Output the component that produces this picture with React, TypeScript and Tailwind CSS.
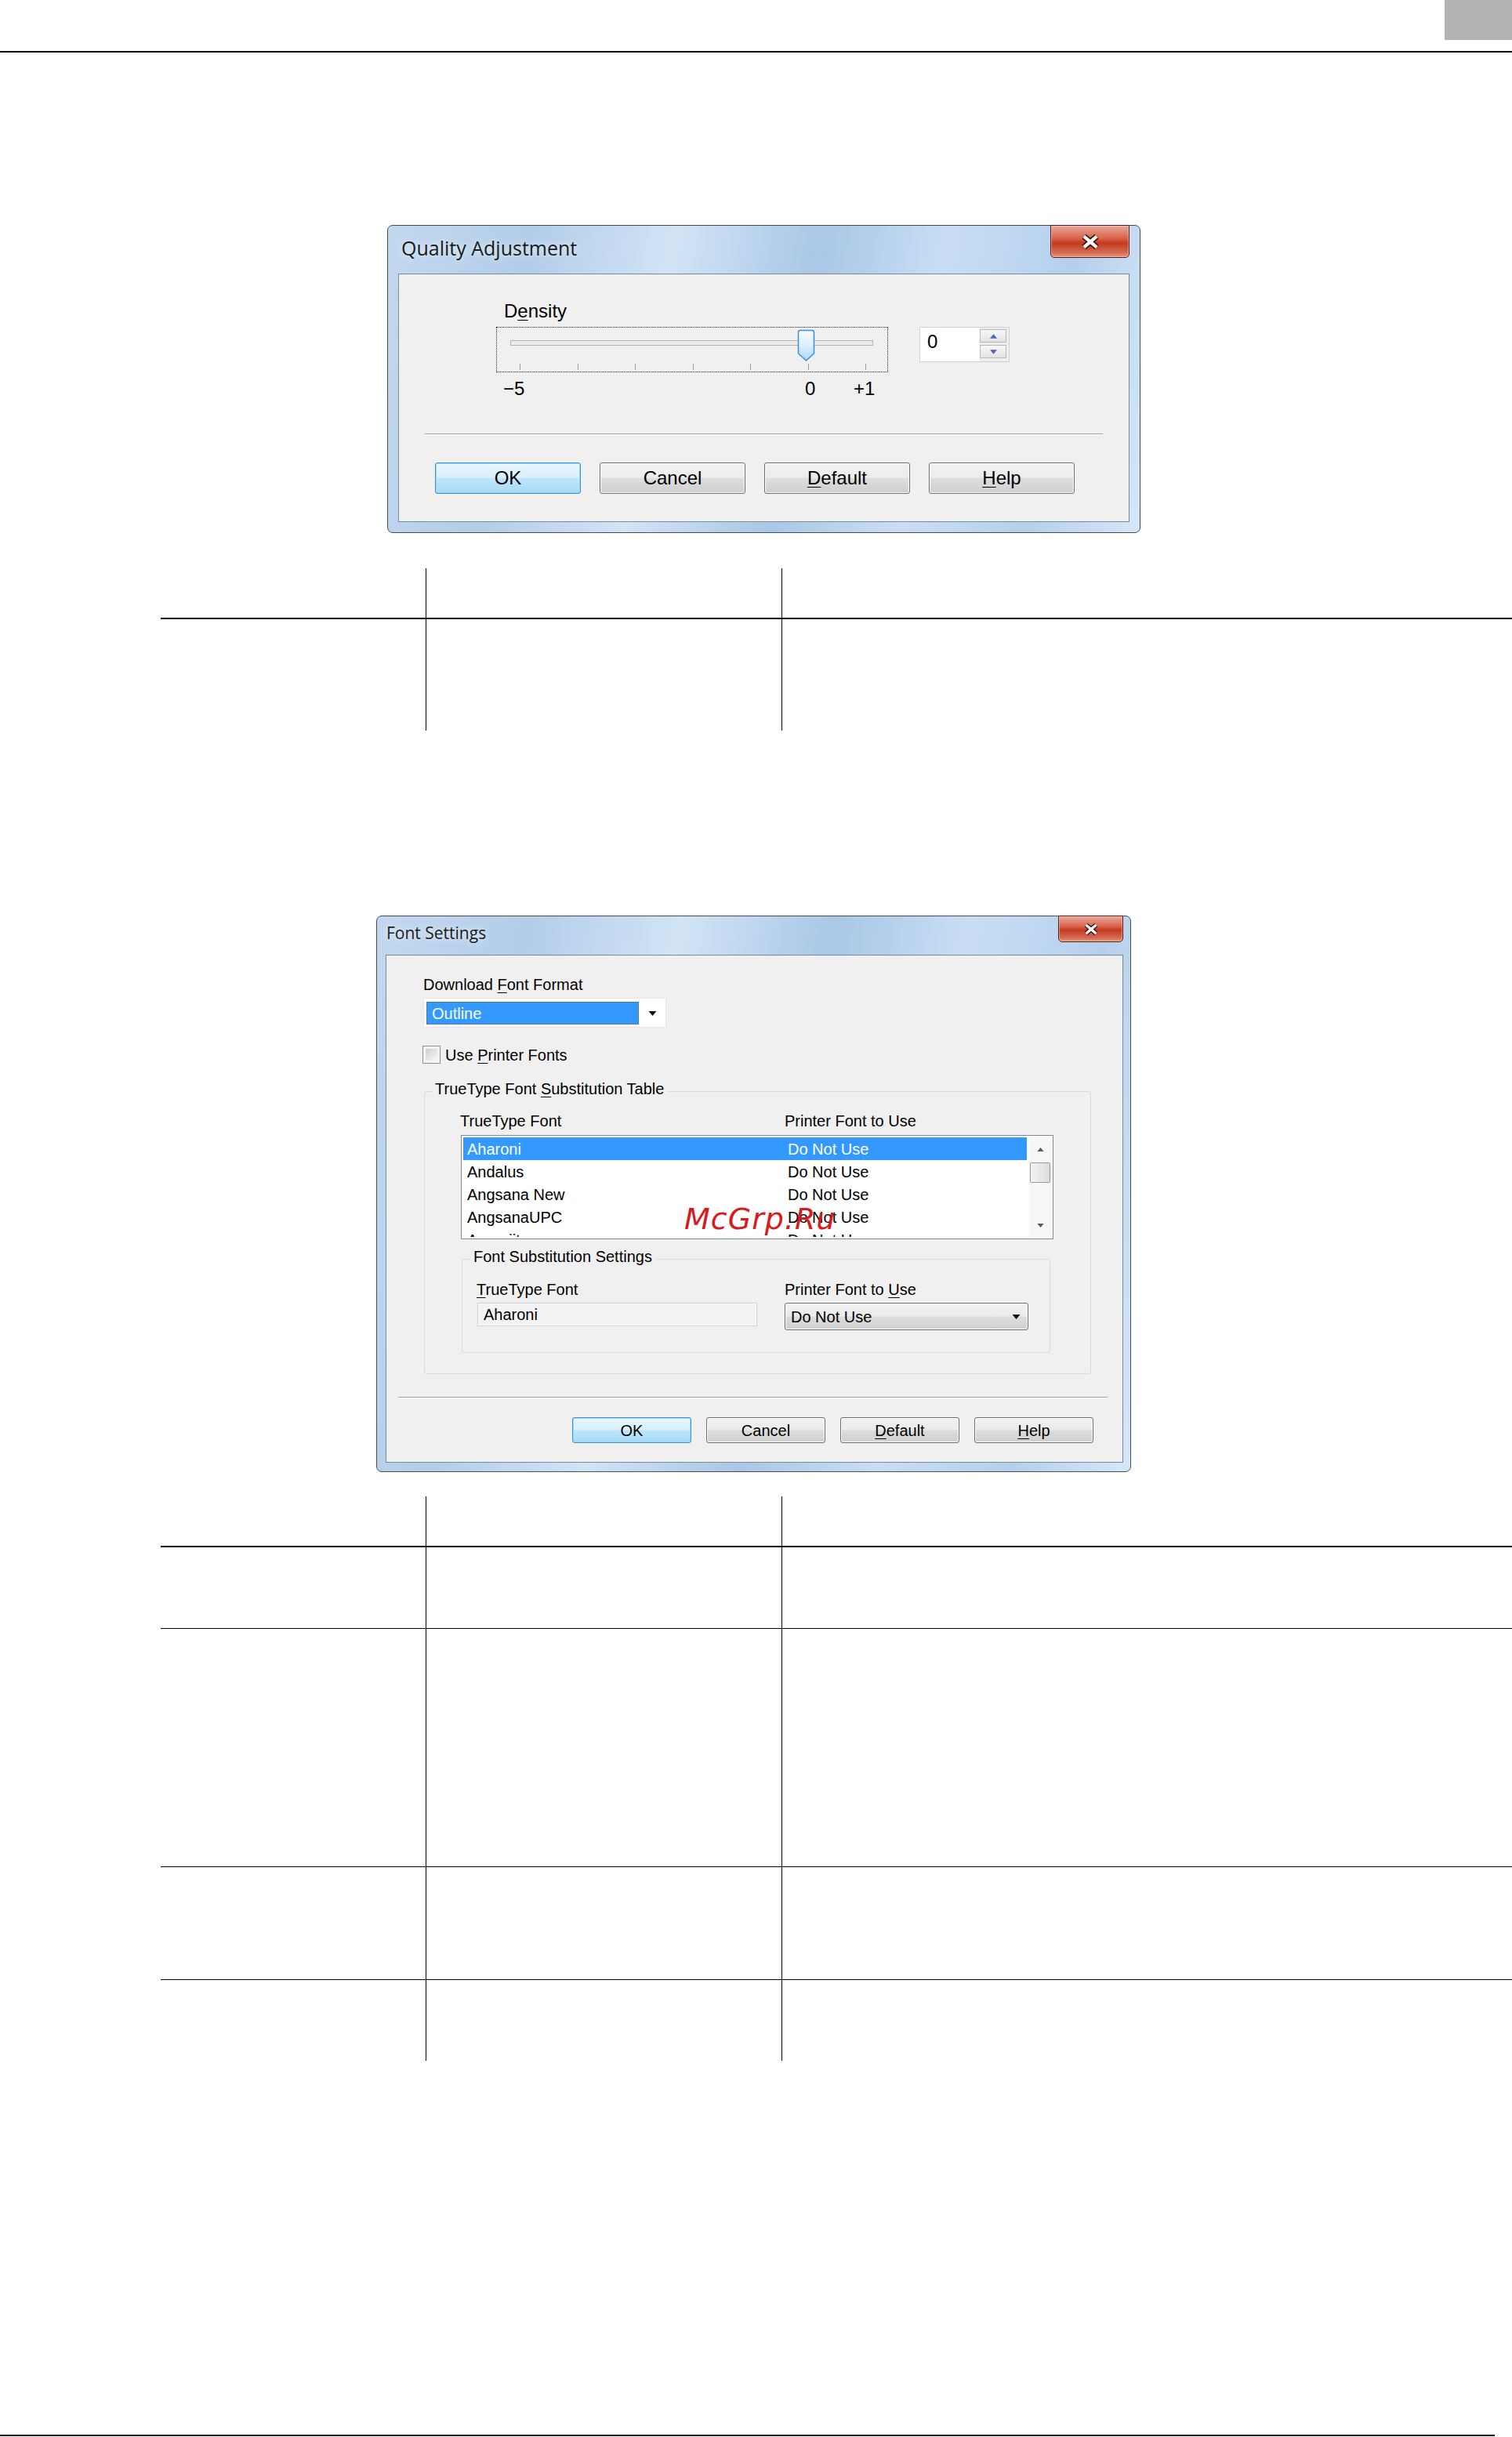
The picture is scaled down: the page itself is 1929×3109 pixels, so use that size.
import React from 'react';

// Windows 7 style dialogs on a manual page, each followed by an empty ruled table

const UI = "font-['Liberation_Sans',Arial,sans-serif]";
const TITLE = "font-['Open_Sans','Noto_Sans',sans-serif] text-[#1b1b1b] [text-shadow:0_0_8px_rgba(255,255,255,0.95)]";
const GLASS =
  'bg-[linear-gradient(100deg,#c2d8ef_0%,#b3cde9_18%,#d2e4f6_36%,#a9c7e6_54%,#c9def4_70%,#b5d0ec_86%,#d6e7f8_100%)]';

const FONT_ROWS = ['Aharoni', 'Andalus', 'Angsana New', 'AngsanaUPC', 'Aparajita'];

type BtnProps = { label: React.ReactNode; primary?: boolean; large?: boolean };

function WinButton({ label, primary, large }: BtnProps) {
  const size = large ? 'w-[186px] h-[40px] text-[24px]' : 'w-[152px] h-[33px] text-[20px]';
  const skin = primary
    ? 'border-[#3c8fd0] bg-[linear-gradient(to_bottom,#eaf6fd_0%,#d9f0fc_48%,#bee6fd_52%,#a7d9f5_100%)] shadow-[inset_0_0_0_1px_#9bd9fa]'
    : 'border-[#707070] bg-[linear-gradient(to_bottom,#f2f2f2_0%,#ebebeb_48%,#dddddd_52%,#cfcfcf_100%)] shadow-[inset_0_0_0_1px_#fcfcfc]';
  return (
    <div className={`flex items-center justify-center shrink-0 rounded-[3px] border leading-none text-black ${size} ${skin}`}>
      {label}
    </div>
  );
}

function CloseButton({ className, glyph }: { className: string; glyph: string }) {
  return (
    <div
      className={`flex items-center justify-center shrink-0 rounded-b-[5px] border border-[#5e1a12] bg-[linear-gradient(to_bottom,#e9a99b_0%,#d8634b_40%,#c23a1f_55%,#d46a4f_85%,#e39a86_100%)] shadow-[inset_0_0_0_1px_rgba(255,210,200,0.5)] ${className}`}
    >
      <svg viewBox="0 0 26 20" className={glyph}>
        <path d="M6 4 L20 16 M20 4 L6 16" stroke="#3b120c" strokeWidth="6.5" />
        <path d="M6 4 L20 16 M20 4 L6 16" stroke="#ffffff" strokeWidth="3.6" />
      </svg>
    </div>
  );
}

function Arrow({ up, className, color }: { up?: boolean; className: string; color: string }) {
  return (
    <svg viewBox="0 0 10 6" className={className}>
      <path d={up ? 'M0 6 L5 0 L10 6 Z' : 'M0 0 L10 0 L5 6 Z'} fill={color} />
    </svg>
  );
}

function Accel({ children }: { children: React.ReactNode }) {
  return <u className="underline decoration-1 underline-offset-[3px]">{children}</u>;
}

/* ── Density trackbar ─────────────────────────────────────────── */
function DensitySlider() {
  const ticks = [0, 1, 2, 3, 4, 5, 6].map((i) => Math.round(29 + i * 73.5) + 0.5);
  return (
    <svg width="498" height="56" viewBox="0 0 498 56" className="block">
      <defs>
        <linearGradient id="thumbFill" x1="0" y1="0" x2="0" y2="1">
          <stop offset="0" stopColor="#f7fcff" />
          <stop offset="0.5" stopColor="#dcefff" />
          <stop offset="1" stopColor="#a9d6f5" />
        </linearGradient>
      </defs>
      <rect x="17.5" y="16.5" width="462" height="6" fill="#ebebeb" stroke="#b4b4b4" />
      {ticks.map((x) => (
        <line key={x} x1={x} x2={x} y1={46} y2={54} stroke="#9c9c9c" />
      ))}
      <path
        d="M384.5 6 Q384.5 3.5 387 3.5 L402 3.5 Q404.5 3.5 404.5 6 L404.5 33 L394.5 42 L384.5 33 Z"
        fill="url(#thumbFill)"
        stroke="#3c8fd0"
        strokeWidth="1.5"
      />
    </svg>
  );
}

function SpinBox() {
  return (
    <div className="w-[115px] h-[45px] flex border border-[#cdd3d9] bg-white">
      <span className="flex-1 pl-[9px] pt-[6px] text-[24px] leading-none">0</span>
      <div className="w-[37px] flex flex-col gap-[3px] pt-[2px] pr-[3px] bg-[#eeeeee]">
        <div className="h-[17px] flex items-center justify-center border border-[#b9b9b9] bg-[linear-gradient(to_bottom,#f7f7f7,#e3e3e3)]">
          <Arrow up className="w-[9px] h-[6px]" color="#4e62b8" />
        </div>
        <div className="h-[17px] flex items-center justify-center border border-[#b9b9b9] bg-[linear-gradient(to_bottom,#f7f7f7,#e3e3e3)]">
          <Arrow className="w-[9px] h-[6px]" color="#4e62b8" />
        </div>
      </div>
    </div>
  );
}

function QualityDialog() {
  return (
    <div className={`w-[961px] h-[393px] flex flex-col rounded-[7px] border border-[#4b4b4b] px-[13px] pb-[13px] ${GLASS}`}>
      <div className="h-[61px] flex justify-between shrink-0">
        <span className={`ml-[4px] mt-[16px] text-[25px] leading-none ${TITLE}`}>Quality Adjustment</span>
        <CloseButton className="w-[101px] h-[42px] -mt-px" glyph="w-[30px] h-[23px]" />
      </div>

      <div className={`flex-1 flex flex-col border border-[#7b8a99] bg-[#f0f0f0] text-[24px] leading-none text-black ${UI}`}>
        <span className="mt-[35px] ml-[134px]">
          D<Accel>e</Accel>nsity
        </span>

        <div className="mt-[8px] ml-[124px] flex items-start gap-[40px]">
          <div className="w-[500px] h-[58px] border border-dotted border-[#222]">
            <DensitySlider />
          </div>
          <SpinBox />
        </div>

        <div className="mt-[9px] ml-[133px] flex">
          <span className="w-[385px]">−5</span>
          <span className="w-[62px]">0</span>
          <span>+1</span>
        </div>

        <div className="mt-[45px] ml-[33px] w-[865px] h-[2px] border-t border-[#a0a0a0] bg-white" />

        <div className="mt-[35px] ml-[46px] flex gap-[24px]">
          <WinButton large primary label="OK" />
          <WinButton large label="Cancel" />
          <WinButton large label={<><Accel>D</Accel>efault</>} />
          <WinButton large label={<><Accel>H</Accel>elp</>} />
        </div>
      </div>
    </div>
  );
}

/* ── Font settings dialog ─────────────────────────────────────── */
function FontList() {
  return (
    <div className="mt-[8px] ml-[1px] w-[756px] h-[133px] flex gap-[3px] border border-[#828790] bg-white p-[2px]">
      <div className="w-[719px] h-full overflow-hidden">
        {FONT_ROWS.map((name, i) => (
          <div
            key={name}
            className={`h-[29px] shrink-0 grid grid-cols-[409px_1fr] items-center pl-[5px] ${
              i === 0 ? 'bg-[#3399ff] text-white' : 'text-black'
            }`}
          >
            <span>{name}</span>
            <span>Do Not Use</span>
          </div>
        ))}
      </div>
      <div className="w-[28px] h-full flex flex-col bg-[#f7f7f7]">
        <div className="h-[30px] flex items-center justify-center">
          <Arrow up className="w-[9px] h-[5px]" color="#5a5a5a" />
        </div>
        <div className="mt-[2px] mx-[1px] h-[26px] rounded-[2px] border border-[#9a9a9a] bg-[linear-gradient(to_right,#f4f4f4,#dcdcdc)]" />
        <div className="flex-1" />
        <div className="h-[30px] flex items-center justify-center">
          <Arrow className="w-[9px] h-[5px]" color="#5a5a5a" />
        </div>
      </div>
    </div>
  );
}

function FontDialog() {
  return (
    <div className={`relative w-[963px] h-[710px] flex flex-col rounded-[7px] border border-[#4b4b4b] pl-[11px] pr-[9px] pb-[11px] ${GLASS}`}>
      <div className="h-[49px] flex justify-between shrink-0">
        <span className={`ml-[1px] mt-[11px] text-[21px] leading-none ${TITLE}`}>Font Settings</span>
        <CloseButton className="w-[83px] h-[34px] -mt-px" glyph="w-[24px] h-[19px]" />
      </div>

      <div className={`flex-1 flex flex-col border border-[#7b8a99] bg-[#f0f0f0] text-[20px] leading-none text-black ${UI}`}>
        <span className="mt-[27px] ml-[47px]">
          Download <Accel>F</Accel>ont Format
        </span>

        {/* download format combo */}
        <div className="mt-[7px] ml-[47px] w-[310px] h-[38px] flex items-start border border-[#e1e7ed] bg-white pl-[3px] pt-[4px]">
          <div className="w-[271px] h-[29px] flex items-center border border-dotted border-[#7a5a20] bg-[#3399ff] pl-[6px] text-white">
            Outline
          </div>
          <div className="flex-1 h-[29px] flex items-center justify-center">
            <Arrow className="w-[11px] h-[6px]" color="#111" />
          </div>
        </div>

        <div className="mt-[23px] ml-[46px] h-[23px] flex items-center gap-[6px]">
          <div className="w-[23px] h-[23px] border border-[#8f8f8f] bg-[#f4f4f4] p-[3px]">
            <div className="w-full h-full bg-[linear-gradient(135deg,#cfcfcf,#f7f7f7)]" />
          </div>
          <span>
            Use <Accel>P</Accel>rinter Fonts
          </span>
        </div>

        <fieldset className="mt-[22px] ml-[48px] w-[851px] rounded-[3px] border border-[#d3dde4] pb-[26px]">
          <legend className="ml-[9px] px-[4px] pb-[6px] leading-none">
            TrueType Font <Accel>S</Accel>ubstitution Table
          </legend>
          <div className="pl-[45px] pt-[15px]">
            <div className="grid grid-cols-[414px_1fr]">
              <span>TrueType Font</span>
              <span>Printer Font to Use</span>
            </div>

            <FontList />

            <fieldset className="mt-[12px] ml-[2px] w-[751px] rounded-[3px] border border-[#d3dde4] pb-[28px]">
              <legend className="ml-[10px] px-[4px] pb-[7px] leading-none">Font Substitution Settings</legend>
              <div className="pl-[18px] pt-[15px] grid grid-cols-[393px_1fr]">
                <div className="flex flex-col">
                  <span>
                    <Accel>T</Accel>rueType Font
                  </span>
                  <div className="mt-[7px] ml-[1px] w-[357px] h-[30px] flex items-center border border-[#cfd3d7] bg-[#f3f3f3] pl-[7px] shadow-[inset_0_0_0_1px_#fbfbfb]">
                    Aharoni
                  </div>
                </div>
                <div className="flex flex-col">
                  <span>
                    Printer Font to <Accel>U</Accel>se
                  </span>
                  <div className="mt-[7px] w-[311px] h-[35px] flex items-center justify-between rounded-[3px] border border-[#707070] bg-[linear-gradient(to_bottom,#f2f2f2_0%,#ebebeb_48%,#dddddd_52%,#cfcfcf_100%)] pl-[7px] pr-[9px] shadow-[inset_0_0_0_1px_#fcfcfc]">
                    <span>Do Not Use</span>
                    <Arrow className="w-[11px] h-[6px]" color="#111" />
                  </div>
                </div>
              </div>
            </fieldset>
          </div>
        </fieldset>

        <div className="mt-[29px] ml-[15px] w-[905px] h-[2px] border-t border-[#a0a0a0] bg-white" />

        <div className="mt-[24px] pr-[37px] flex justify-end gap-[19px]">
          <WinButton primary label="OK" />
          <WinButton label="Cancel" />
          <WinButton label={<><Accel>D</Accel>efault</>} />
          <WinButton label={<><Accel>H</Accel>elp</>} />
        </div>
      </div>

      {/* site watermark stamped over the list */}
      <span className="absolute left-[392px] top-[367px] text-[38px] leading-none italic tracking-[1px] text-[#d71920] font-['DejaVu_Sans',sans-serif]">
        McGrp.Ru
      </span>
    </div>
  );
}

/* ── Empty three-column table ─────────────────────────────────── */
function TableRow({ className }: { className: string }) {
  return (
    <div className={`grid grid-cols-[338px_454px_1fr] ${className}`}>
      <div />
      <div className="border-l border-black" />
      <div className="border-l border-black" />
    </div>
  );
}

function DocTable({ bodyRows }: { bodyRows: string[] }) {
  return (
    <div className="ml-[205px] w-[1724px]">
      <TableRow className="h-[63px]" />
      <div className="h-[2px] bg-black" />
      {bodyRows.map((h, i) => (
        <React.Fragment key={i}>
          {i > 0 && <div className="h-px bg-black" />}
          <TableRow className={h} />
        </React.Fragment>
      ))}
    </div>
  );
}

export default function App() {
  return (
    <div className="w-[1929px] h-[3109px] bg-white overflow-hidden">
      <div className="h-[65px] flex justify-end">
        <div className="w-[86px] h-[51px] bg-[#b3b3b3]" />
      </div>
      <div className="h-[2px] bg-black" />

      <div className="mt-[220px] ml-[494px]">
        <QualityDialog />
      </div>

      <div className="mt-[45px]">
        <DocTable bodyRows={['h-[142px]']} />
      </div>

      <div className="mt-[236px] ml-[480px]">
        <FontDialog />
      </div>

      <div className="mt-[31px]">
        <DocTable bodyRows={['h-[103px]', 'h-[303px]', 'h-[143px]', 'h-[103px]']} />
      </div>

      <div className="mt-[477px] w-[1907px] h-[2px] bg-black" />
    </div>
  );
}
